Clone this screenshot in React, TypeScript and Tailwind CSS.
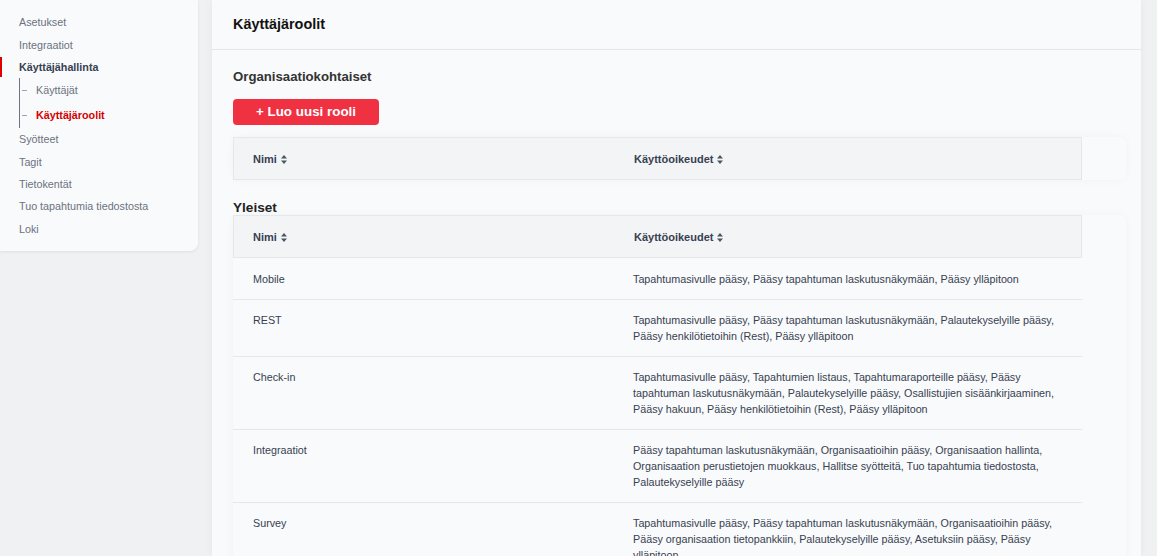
import React from 'react';

const font = { fontFamily: '"Liberation Sans", Arial, sans-serif' };

const SortIcon = () => (
  <svg width="6" height="9" viewBox="0 0 6 9" className="inline-block ml-[4px] -mt-[1px]" fill="#4b5563">
    <path d="M3 0 L6 3.6 L0 3.6 Z" />
    <path d="M3 9 L6 5.4 L0 5.4 Z" />
  </svg>
);

const navTop = [
  { label: 'Asetukset', h: 'h-[23px]' },
  { label: 'Integraatiot', h: 'h-[22px]' },
];
const navBottom = [
  { label: 'Syötteet', h: 'h-[23px]' },
  { label: 'Tagit', h: 'h-[22px]' },
  { label: 'Tietokentät', h: 'h-[22px]' },
  { label: 'Tuo tapahtumia tiedostosta', h: 'h-[23px]' },
  { label: 'Loki', h: 'h-[22px]' },
];

const roles = [
  { name: 'Mobile', perms: 'Tapahtumasivulle pääsy, Pääsy tapahtuman laskutusnäkymään, Pääsy ylläpitoon' },
  {
    name: 'REST',
    perms: 'Tapahtumasivulle pääsy, Pääsy tapahtuman laskutusnäkymään, Palautekyselyille pääsy, Pääsy henkilötietoihin (Rest), Pääsy ylläpitoon',
  },
  {
    name: 'Check-in',
    perms:
      'Tapahtumasivulle pääsy, Tapahtumien listaus, Tapahtumaraporteille pääsy, Pääsy tapahtuman laskutusnäkymään, Palautekyselyille pääsy, Osallistujien sisäänkirjaaminen, Pääsy hakuun, Pääsy henkilötietoihin (Rest), Pääsy ylläpitoon',
  },
  {
    name: 'Integraatiot',
    perms:
      'Pääsy tapahtuman laskutusnäkymään, Organisaatioihin pääsy, Organisaation hallinta, Organisaation perustietojen muokkaus, Hallitse syötteitä, Tuo tapahtumia tiedostosta, Palautekyselyille pääsy',
  },
  {
    name: 'Survey',
    perms:
      'Tapahtumasivulle pääsy, Pääsy tapahtuman laskutusnäkymään, Organisaatioihin pääsy, Pääsy organisaation tietopankkiin, Palautekyselyille pääsy, Asetuksiin pääsy, Pääsy ylläpitoon',
  },
];

const TableHead = () => (
  <div className="flex w-[849px] h-[43px] items-center bg-[#f3f4f6] border border-[#e5e7eb] text-[11px] font-bold text-[#374151] pt-[2px]">
    <div className="w-[400px] pl-[19px]">
      Nimi
      <SortIcon />
    </div>
    <div>
      Käyttöoikeudet
      <SortIcon />
    </div>
  </div>
);

export default function App() {
  return (
    <div className="flex h-[556px] w-[1157px] overflow-hidden bg-[#f0f1f3]" style={font}>
      {/* Sidebar */}
      <div className="w-[198px] self-start shrink-0 bg-[#f9fafb] rounded-br-lg shadow-[0_1px_3px_rgba(0,0,0,0.08)] pt-[11px] pb-[11px] text-[10.75px] text-[#6b7280]">
        {navTop.map((n) => (
          <div key={n.label} className={`${n.h} flex items-center pl-[19px]`}>
            {n.label}
          </div>
        ))}
        <div className="h-[22px] flex items-center">
          <div className="w-[2px] h-[20px] bg-[#dd0000]" />
          <span className="pl-[17px] font-bold text-[#374151]">Käyttäjähallinta</span>
        </div>
        <div className="ml-[19px] border-l border-[#6b7280] h-[50px]">
          <div className="h-[24px] flex items-center">
            <div className="w-[5px] h-px bg-[#9ca3af] ml-[2px]" />
            <span className="pl-[9px]">Käyttäjät</span>
          </div>
          <div className="h-[26px] flex items-center">
            <div className="w-[5px] h-px bg-[#9ca3af] ml-[2px]" />
            <span className="pl-[9px] font-bold text-[#d40000]">Käyttäjäroolit</span>
          </div>
        </div>
        {navBottom.map((n) => (
          <div key={n.label} className={`${n.h} flex items-center pl-[19px]`}>
            {n.label}
          </div>
        ))}
      </div>

      {/* Main panel */}
      <div className="ml-[14px] w-[929px] shrink-0 bg-[#f9fafb] shadow-[0_0_8px_rgba(0,0,0,0.05)]">
        <div className="h-[50px] border-b border-[#e5e7eb] flex items-center pl-[21px] pt-[1px] text-[14.4px] font-bold text-[#111]">
          Käyttäjäroolit
        </div>
        <div className="pl-[21px]">
          <div className="pt-[19px] text-[13.2px] font-bold text-[#333] leading-[16px]">Organisaatiokohtaiset</div>
          <button className="mt-[14px] w-[146px] h-[26px] rounded bg-[#ef3142] text-white text-[13.4px] font-bold">
            + Luo uusi rooli
          </button>
          <div className="mt-[12px] w-[893px] bg-[#f9fafb] rounded-md shadow-[0_0_10px_rgba(0,0,0,0.035)]">
            <TableHead />
          </div>

          <div className="mt-[20px] h-[15px] text-[13.6px] font-bold text-[#222] leading-[15px]">Yleiset</div>
          <div className="w-[893px] bg-[#f9fafb] rounded-md shadow-[0_0_10px_rgba(0,0,0,0.035)]">
            <TableHead />
            <div className="w-[849px]">
              {roles.map((r, i) => (
                <div
                  key={r.name}
                  className={`flex min-h-[42px] border-b border-[#e5e7eb] py-3 text-[10.75px] leading-4 text-[#374151] ${
                    i === 0 ? 'items-center' : ''
                  }`}
                >
                  <div className="w-[400px] pl-[20px] shrink-0">{r.name}</div>
                  <div className="w-[440px]">{r.perms}</div>
                </div>
              ))}
            </div>
          </div>
        </div>
      </div>
    </div>
  );
}
